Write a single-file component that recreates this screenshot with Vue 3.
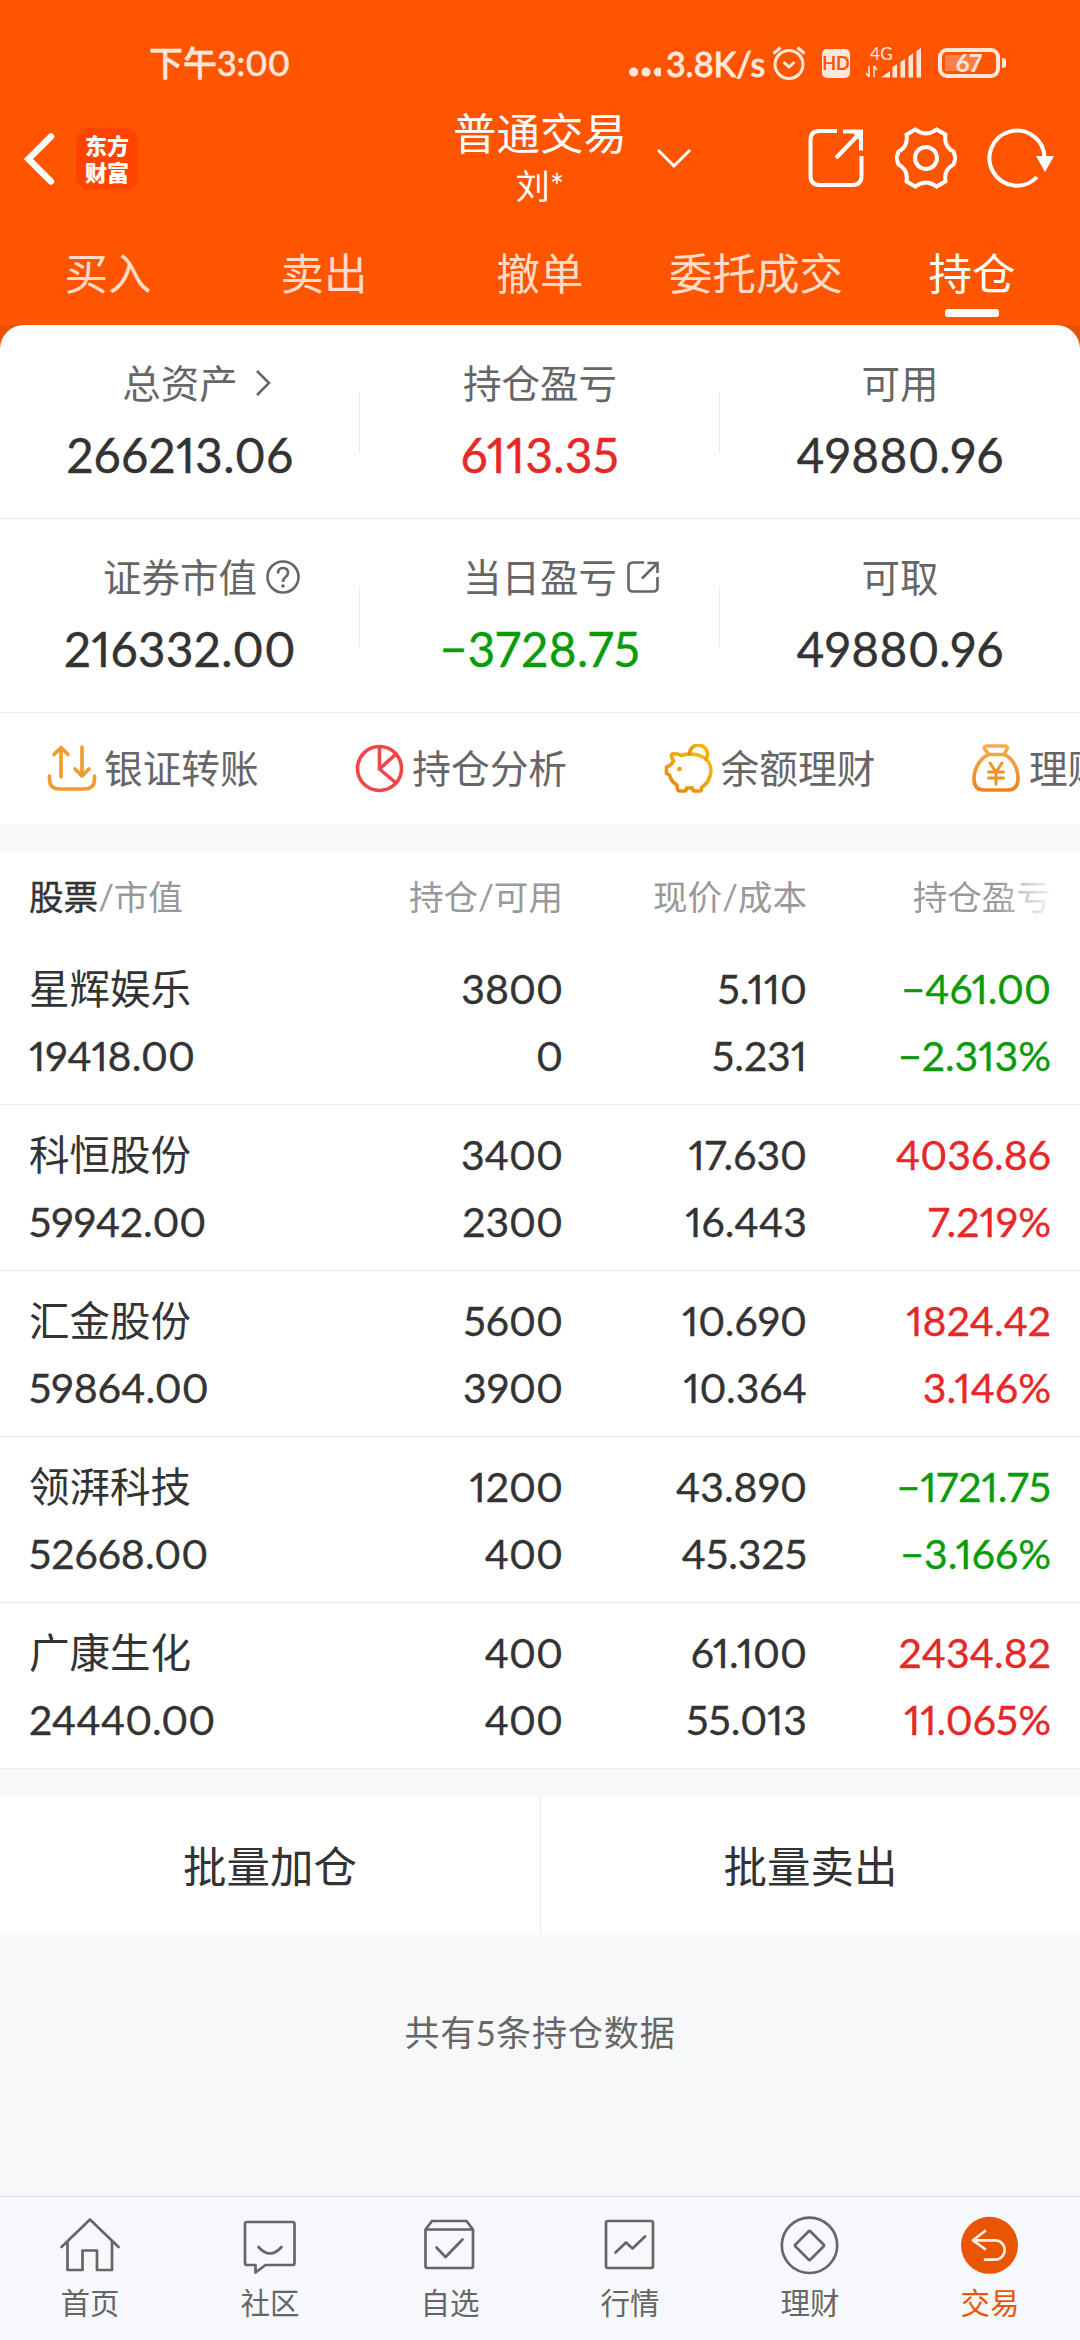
<template>
  <div class="page">
    <header class="header">
      <div class="status-bar">
        <span class="clock">下午3:00</span>
        <div class="status-right">
          <svg class="dots" width="32" height="40" viewBox="0 0 32 40">
            <circle cx="4.600" cy="29" r="4.600" />
            <circle cx="17" cy="29" r="4.600" />
            <circle cx="29.400" cy="29" r="4.600" />
          </svg>
          <span class="speed">3.8K/s</span>
          <svg class="alarm" width="36" height="40" viewBox="0 0 36 40">
            <circle cx="18" cy="21.500" r="14" />
            <path d="M12.500 19l5.500 5 5.500-5M2.500 10.500l7-6M33.500 10.500l-7-6" />
          </svg>
          <span class="hd">HD</span>
          <div class="signal">
            <span class="net">4G</span>
            <svg width="57" height="40" viewBox="0 0 57 40">
              <path d="M16 34.500l9-6.500v6.500zM27.500 34.500v-10.500l4.500-2.500v13zM35.500 34.500V19l4.500-3v18.500zM43.500 34.500V13.500l4.500-3v24zM51.500 34.500V8l4.500-3v29.500z" />
              <path class="thin" d="M4 34V23M4 34l-3-4M9 23v11M9 23l3 4" />
            </svg>
          </div>
          <div class="battery"><i class="level"></i><b>67</b></div>
          <i class="nub"></i>
        </div>
      </div>

      <div class="title-bar">
        <div class="title-left">
          <svg class="back" width="34" height="56" viewBox="0 0 34 56">
            <path d="M29 5.500L6.500 28 29 50.500" />
          </svg>
          <div class="logo"><span>东方</span><span>财富</span></div>
        </div>
        <div class="title-center">
          <div class="title-text">
            <h1>普通交易</h1>
            <p>刘*</p>
          </div>
          <svg class="chevron" width="36" height="22" viewBox="0 0 36 22">
            <path d="M2 2l16 16L34 2" />
          </svg>
        </div>
        <div class="title-right">
          <svg width="62" height="62" viewBox="0 0 62 62">
            <path d="M33 4H15.500q-9 0-9 9v36q0 9 9 9h33q9 0 9-9V29" />
            <path d="M39 4.500h18v19M57 5L32 31" />
            <path class="solid" d="M47 4h12v13z" />
          </svg>
          <svg width="62" height="62" viewBox="0 0 62 62">
            <path d="M20.500 2.500q10.500 8 21 0l9 5q-2 12 8 17l2 6.500-2 6.500q-10 5-8 17l-9 5q-10.500-8-21 0l-9-5q2-12-8-17l-2-6.500 2-6.500q10-5 8-17z" />
            <circle cx="31" cy="31" r="11" />
          </svg>
          <svg width="68" height="62" viewBox="0 0 68 62">
            <path d="M58.500 31A27.500 27.500 0 1 0 51 50" />
            <path class="solid" d="M50 29h18l-9 16z" />
          </svg>
        </div>
      </div>

      <nav class="tabs">
        <span
          v-for="tab in tabs"
          :key="tab"
          class="tab"
          :class="{ active: tab === activeTab }"
          @click="activeTab = tab"
          >{{ tab }}</span
        >
      </nav>
    </header>

    <div class="card-wrap">
      <section class="summary">
        <div class="summary-row">
          <div class="cell">
            <div class="label">
              总资产
              <svg class="label-icon arrow" width="18" height="30" viewBox="0 0 18 30">
                <path d="M3 3l12 12L3 27" />
              </svg>
            </div>
            <div class="value">266213.06</div>
          </div>
          <div class="cell">
            <div class="label">持仓盈亏</div>
            <div class="value red">6113.35</div>
          </div>
          <div class="cell">
            <div class="label">可用</div>
            <div class="value">49880.96</div>
          </div>
        </div>
        <div class="summary-row">
          <div class="cell">
            <div class="label">
              证券市值
              <svg class="label-icon" width="34" height="34" viewBox="0 0 34 34">
                <circle cx="17" cy="17" r="15.500" />
                <path d="M12 13.500q0-5.500 5-5.500t5 5q0 2-2.500 4T17 22" />
                <circle class="dot" cx="17" cy="26" r="1.800" />
              </svg>
            </div>
            <div class="value">216332.00</div>
          </div>
          <div class="cell">
            <div class="label">
              当日盈亏
              <svg class="label-icon" width="34" height="34" viewBox="0 0 34 34">
                <path d="M18 2.500H7q-4.500 0-4.500 4.500v20q0 4.500 4.500 4.500h20q4.500 0 4.500-4.500V17" />
                <path d="M21.500 3h10v10M31 3.500L16 18.500" />
              </svg>
            </div>
            <div class="value green">−3728.75</div>
          </div>
          <div class="cell">
            <div class="label">可取</div>
            <div class="value">49880.96</div>
          </div>
        </div>
      </section>
    </div>

    <section class="tools">
      <div class="tool">
        <svg width="50" height="50" viewBox="0 0 50 50" stroke="#ee9d2f">
          <path d="M14 33V4M7 10.500l7-7 7 7M35 3v29M28 25l7 7 7-7M2.500 32v3q0 10 10 10h25q10 0 10-10v-3" />
        </svg>
        银证转账
      </div>
      <div class="tool">
        <svg width="50" height="50" viewBox="0 0 50 50" stroke="#ee4747">
          <circle cx="24.500" cy="24.500" r="22" />
          <path d="M24.500 3v22L41 39M24.500 25L41 10" />
        </svg>
        持仓分析
      </div>
      <div class="tool">
        <svg width="50" height="50" viewBox="0 0 50 50" stroke="url(#pig)">
          <defs>
            <linearGradient id="pig" x1="1" y1="0" x2="0" y2="1">
              <stop offset="0" stop-color="#f6c012" />
              <stop offset="1" stop-color="#e5820e" />
            </linearGradient>
          </defs>
          <path d="M2.500 23q5-1.500 7-6Q6 11 8.500 10q5-.8 8.500 1.500 8-2.500 17-.5c9 2.500 13 9 13 16q-1 11-9.500 16.500v2q0 1.500-2 1.500h-5q-2 0-2-3h-6q0 3-2 3h-5q-2.500 0-2.500-6-6-3.500-7.500-10l-3-1.500z" />
          <path d="M25.500 10a9 9 0 1 1 16.500 5" />
          <circle class="eye" cx="15.500" cy="25" r="2.300" />
        </svg>
        余额理财
      </div>
      <div class="tool">
        <svg width="50" height="50" viewBox="0 0 50 50" stroke="url(#bag)">
          <defs>
            <linearGradient id="bag" x1="0" y1="0" x2="0" y2="1">
              <stop offset="0" stop-color="#f7ad4b" />
              <stop offset="1" stop-color="#ec8420" />
            </linearGradient>
          </defs>
          <path d="M17 10.500L12.500 5q-.5-3 2-3h18q3.500 0 2.500 3l-3 5.500zC8 14 2 25 2 34.500q0 11.500 10 11.500h24q10 0 10-11.500C46 25 41 14 32 10.500" />
          <path class="yen" d="M18 19l6 9 6-9M24 28v12M16.500 28h15M16.500 34h15" />
        </svg>
        理财
      </div>
    </section>

    <section class="table">
      <div class="table-head">
        <span><b>股票</b>/市值</span>
        <span>持仓/可用</span>
        <span>现价/成本</span>
        <span class="fade">持仓盈亏</span>
      </div>
      <div v-for="stock in stocks" :key="stock.name" class="stock">
        <div class="col">
          <span class="name">{{ stock.name }}</span>
          <span>{{ stock.value }}</span>
        </div>
        <div class="col">
          <span>{{ stock.hold }}</span>
          <span>{{ stock.usable }}</span>
        </div>
        <div class="col">
          <span>{{ stock.price }}</span>
          <span>{{ stock.cost }}</span>
        </div>
        <div class="col" :class="stock.profit.startsWith('−') ? 'green' : 'red'">
          <span>{{ stock.profit }}</span>
          <span>{{ stock.rate }}</span>
        </div>
      </div>
    </section>

    <div class="batch">
      <button>批量加仓</button>
      <button>批量卖出</button>
    </div>

    <p class="total">共有{{ stocks.length }}条持仓数据</p>

    <footer class="bottom-nav">
      <div class="nav-item">
        <svg width="60" height="62" viewBox="0 0 60 62">
          <path d="M1.500 33L30 5.500 58.500 33M7.500 28v28h15V36.500h14.500V56h15V28" />
        </svg>
        首页
      </div>
      <div class="nav-item">
        <svg width="60" height="62" viewBox="0 0 60 62">
          <path d="M7 8h45.500q2 0 2 2v39q0 2-2 2H25.500l-10 7.500V51H7q-2 0-2-2V10q0-2 2-2z" />
          <path d="M18.500 33q11.500 13 23 0" />
        </svg>
        社区
      </div>
      <div class="nav-item">
        <svg width="60" height="62" viewBox="0 0 60 62">
          <path d="M5.500 15.500L12 7h34.500l6.500 8.500V52q0 2-2 2H7.500q-2 0-2-2zH53M16.500 33.500l9 9.500L42.500 25.500" />
        </svg>
        自选
      </div>
      <div class="nav-item">
        <svg width="60" height="62" viewBox="0 0 60 62">
          <rect x="6" y="7" width="47" height="47" rx="2" />
          <path d="M15.500 38.500L26 28.500l6.500 6L45 22.500" />
        </svg>
        行情
      </div>
      <div class="nav-item">
        <svg width="60" height="62" viewBox="0 0 60 62">
          <circle cx="29.500" cy="31.300" r="27.700" />
          <path d="M28.500 17.500q1-1 2 0L43.500 30.500q1 1 0 2L30.500 45.500q-1 1-2 0L15.500 32.500q-1-1 0-2z" />
        </svg>
        理财
      </div>
      <div class="nav-item current">
        <svg width="60" height="62" viewBox="0 0 60 62">
          <circle cx="29.500" cy="31.300" r="28.500" />
          <path d="M25 17L13 26.300 25 35M13 26.300h22a9.700 9.700 0 0 1 0 19.400H25" />
        </svg>
        交易
      </div>
    </footer>
  </div>
</template>

<script setup>
import { ref } from "vue";

const tabs = ["买入", "卖出", "撤单", "委托成交", "持仓"];
const activeTab = ref("持仓");

const stocks = ref([
  {
    name: "星辉娱乐",
    value: "19418.00",
    hold: "3800",
    usable: "0",
    price: "5.110",
    cost: "5.231",
    profit: "−461.00",
    rate: "−2.313%",
  },
  {
    name: "科恒股份",
    value: "59942.00",
    hold: "3400",
    usable: "2300",
    price: "17.630",
    cost: "16.443",
    profit: "4036.86",
    rate: "7.219%",
  },
  {
    name: "汇金股份",
    value: "59864.00",
    hold: "5600",
    usable: "3900",
    price: "10.690",
    cost: "10.364",
    profit: "1824.42",
    rate: "3.146%",
  },
  {
    name: "领湃科技",
    value: "52668.00",
    hold: "1200",
    usable: "400",
    price: "43.890",
    cost: "45.325",
    profit: "−1721.75",
    rate: "−3.166%",
  },
  {
    name: "广康生化",
    value: "24440.00",
    hold: "400",
    usable: "400",
    price: "61.100",
    cost: "55.013",
    profit: "2434.82",
    rate: "11.065%",
  },
]);
</script>

<style>
body {
  margin: 0;
  background-color: #f7f8fa;
}
</style>

<style scoped>
.page {
  display: flex;
  flex-direction: column;
  width: 1080px;
  height: 2340px;
  overflow: hidden;
  background-color: #f7f8fa;
  color: #333;
  font-family: Lato, "Noto Sans CJK SC", sans-serif;
  font-feature-settings: "pnum";
}

svg {
  flex: none;
  fill: none;
}

h1,
p {
  margin: 0;
  font-weight: normal;
}

.red {
  color: #e62828;
}

.green {
  color: #0a9b0a;
}

/* 顶部 */
.header {
  height: 325px;
  background-color: #ff5500;
  color: white;
}

.status-bar {
  display: flex;
  justify-content: space-between;
  align-items: center;
  height: 126px;
  padding: 0 74px 0 149px;
  box-sizing: border-box;
  color: #ffe6da;
}

.clock {
  margin-top: -3px;
  font-size: 34px;
  font-weight: 500;
  -webkit-text-stroke: 0.5px #ffe6da;
}

.status-right {
  display: flex;
  align-items: center;
}

.dots,
.signal svg {
  fill: #ffe6da;
}

.dots {
  margin-right: 5px;
}

.speed {
  width: 105px;
  font-size: 34px;
  font-weight: 500;
  white-space: nowrap;
  -webkit-text-stroke: 0.8px #ffe6da;
}

.alarm {
  stroke: #ffe6da;
  stroke-width: 3;
}

.hd {
  width: 28px;
  height: 29px;
  margin: 0 15px;
  border-radius: 5px;
  background-color: #ffe6da;
  color: #ff5500;
  font-size: 18px;
  font-weight: bold;
  line-height: 29px;
  text-align: center;
}

.signal {
  display: flex;
  position: relative;
  width: 57px;
  margin-right: 16px;
}

.net {
  position: absolute;
  left: 5px;
  top: 2px;
  font-size: 17px;
  line-height: 17px;
}

.thin {
  fill: none;
  stroke: #ffe6da;
  stroke-width: 1.5;
}

.battery {
  display: flex;
  position: relative;
  justify-content: center;
  align-items: center;
  width: 62px;
  height: 30px;
  box-sizing: border-box;
  border: 4px solid #ffe6da;
  border-radius: 9px;
  font-size: 24px;
  line-height: 22px;
}

.battery b {
  position: relative;
}

.level {
  position: absolute;
  left: 3px;
  top: 3px;
  width: 32px;
  height: 16px;
  border-radius: 2px;
  background-color: #ff7f47;
}

.nub {
  width: 4px;
  height: 10px;
  margin-left: 2px;
  border-radius: 0 3px 3px 0;
  background-color: #ffe6da;
}

.title-bar {
  display: grid;
  grid-template-columns: 360px 360px 360px;
  align-items: center;
  height: 98px;
  padding-top: 6px;
  box-sizing: border-box;
}

.title-left {
  display: flex;
  align-items: center;
  margin-top: -38px;
  padding-left: 22px;
}

.back {
  margin-right: 20px;
  stroke: white;
  stroke-width: 6.5;
  stroke-linecap: round;
}

.logo {
  display: flex;
  flex-direction: column;
  justify-content: center;
  width: 62px;
  height: 62px;
  border-radius: 13px;
  background-color: #ff4400;
  font-size: 22px;
  font-weight: 900;
  line-height: 27px;
  text-align: center;
}

.title-center {
  display: flex;
  justify-content: center;
  align-items: center;
  margin-top: -38px;
}

.title-text {
  text-align: center;
}

.title-text h1 {
  font-size: 43.5px;
  line-height: 54px;
}

.title-text p {
  font-size: 34px;
  line-height: 52px;
}

.chevron {
  margin-right: -65px;
  margin-left: 29px;
  stroke: white;
  stroke-width: 3;
}

.title-right {
  display: flex;
  justify-content: flex-end;
  align-items: center;
  gap: 29px;
  margin-top: -40px;
  padding-right: 26px;
}

.title-right svg {
  stroke: white;
  stroke-width: 4;
}

.title-right .solid {
  fill: white;
  stroke: none;
}

.tabs {
  display: grid;
  grid-template-columns: repeat(5, 1fr);
  height: 101px;
}

.tab {
  position: relative;
  color: #ffdcc8;
  font-size: 43.5px;
  line-height: 98px;
  text-align: center;
}

.tab.active {
  color: white;
}

.tab.active::after {
  content: "";
  position: absolute;
  left: 81px;
  bottom: 8px;
  width: 54px;
  height: 8px;
  border-radius: 3px;
  background-color: white;
}

/* 资产汇总 */
.card-wrap {
  background-color: #e95201;
}

.summary {
  border-radius: 24px 24px 0 0;
  background-color: white;
}

.summary-row {
  display: grid;
  grid-template-columns: repeat(3, 360px);
  height: 194px;
  padding-top: 34px;
  box-sizing: border-box;
  border-bottom: 1px solid #ebebeb;
}

.cell {
  position: relative;
}

.cell + .cell::before {
  content: "";
  position: absolute;
  left: -1px;
  top: 33px;
  width: 1px;
  height: 61px;
  background-color: #ebebeb;
}

.label {
  display: flex;
  justify-content: center;
  align-items: center;
  height: 48px;
  color: #666;
  font-size: 38.5px;
  line-height: 48px;
}

.label-icon {
  margin-right: -43px;
  margin-left: 9px;
  stroke: #666;
  stroke-width: 2.6;
}

.label-icon.arrow {
  margin-right: -34px;
  margin-left: 16px;
}

.label-icon .dot {
  fill: #666;
  stroke: none;
}

.value {
  margin-top: 20px;
  font-size: 47.5px;
  letter-spacing: 0.5px;
  line-height: 56px;
  text-align: center;
  -webkit-text-stroke: 0.4px currentColor;
}

/* 快捷入口 */
.tools {
  display: flex;
  height: 111px;
  padding-left: 47px;
  overflow: hidden;
  background-color: white;
}

.tool {
  display: flex;
  flex: none;
  align-items: center;
  gap: 7px;
  width: 308.3px;
  color: #666;
  font-size: 38.7px;
  line-height: 109px;
  white-space: nowrap;
}

.tool svg {
  stroke-width: 3.6;
  stroke-linecap: round;
  stroke-linejoin: round;
}

.eye {
  fill: #e99a10;
  stroke: none;
}

.yen {
  stroke: #f0922a;
  stroke-width: 3;
}

/* 持仓列表 */
.table {
  margin-top: 28px;
  background-color: white;
}

.table-head,
.stock {
  display: grid;
  grid-template-columns: 290px 244px 244px 244px;
  padding-left: 29px;
}

.table-head {
  height: 87px;
  color: #999;
  font-size: 34.6px;
  line-height: 89px;
}

.table-head b {
  color: #333;
  font-weight: normal;
  -webkit-text-stroke: 0.4px #333;
}

.table-head span + span,
.col + .col {
  text-align: right;
}

.fade {
  background: linear-gradient(to right, #999 190px, #fff 250px);
  background-clip: text;
  color: transparent;
}

.stock {
  height: 166px;
  padding-top: 16px;
  box-sizing: border-box;
  border-bottom: 1px solid #ebebeb;
  font-size: 41px;
}

.col {
  display: flex;
  flex-direction: column;
  line-height: 67px;
}

.col span:not(.name) {
  -webkit-text-stroke: 0.3px currentColor;
}

.name {
  font-size: 40.5px;
}

.batch {
  display: grid;
  grid-template-columns: 1fr 1fr;
  height: 138px;
  margin-top: 28px;
  background-color: white;
}

.batch button {
  padding: 0 0 3px;
  border: none;
  background: none;
  color: #333;
  font-family: inherit;
  font-size: 43.5px;
}

.batch button + button {
  border-left: 1px solid #ebebeb;
}

.total {
  margin-top: 72px;
  color: #666;
  font-size: 35px;
  letter-spacing: 0.9px;
  line-height: 50px;
  text-align: center;
}

/* 底部导航 */
.bottom-nav {
  display: grid;
  grid-template-columns: repeat(6, 180px);
  height: 144px;
  margin-top: auto;
  box-sizing: border-box;
  border-top: 1px solid #dedee0;
  background-color: #f7f8fb;
}

.nav-item {
  display: flex;
  flex-direction: column;
  align-items: center;
  padding-top: 17px;
  color: #666;
  font-size: 29.5px;
  line-height: 54px;
}

.nav-item svg {
  stroke: #666;
  stroke-width: 2.7;
  stroke-linecap: round;
  stroke-linejoin: round;
}

.current {
  color: #ea5504;
}

.current svg {
  stroke: #fff0e4;
}

.current circle {
  fill: #ea5504;
  stroke: none;
}
</style>
